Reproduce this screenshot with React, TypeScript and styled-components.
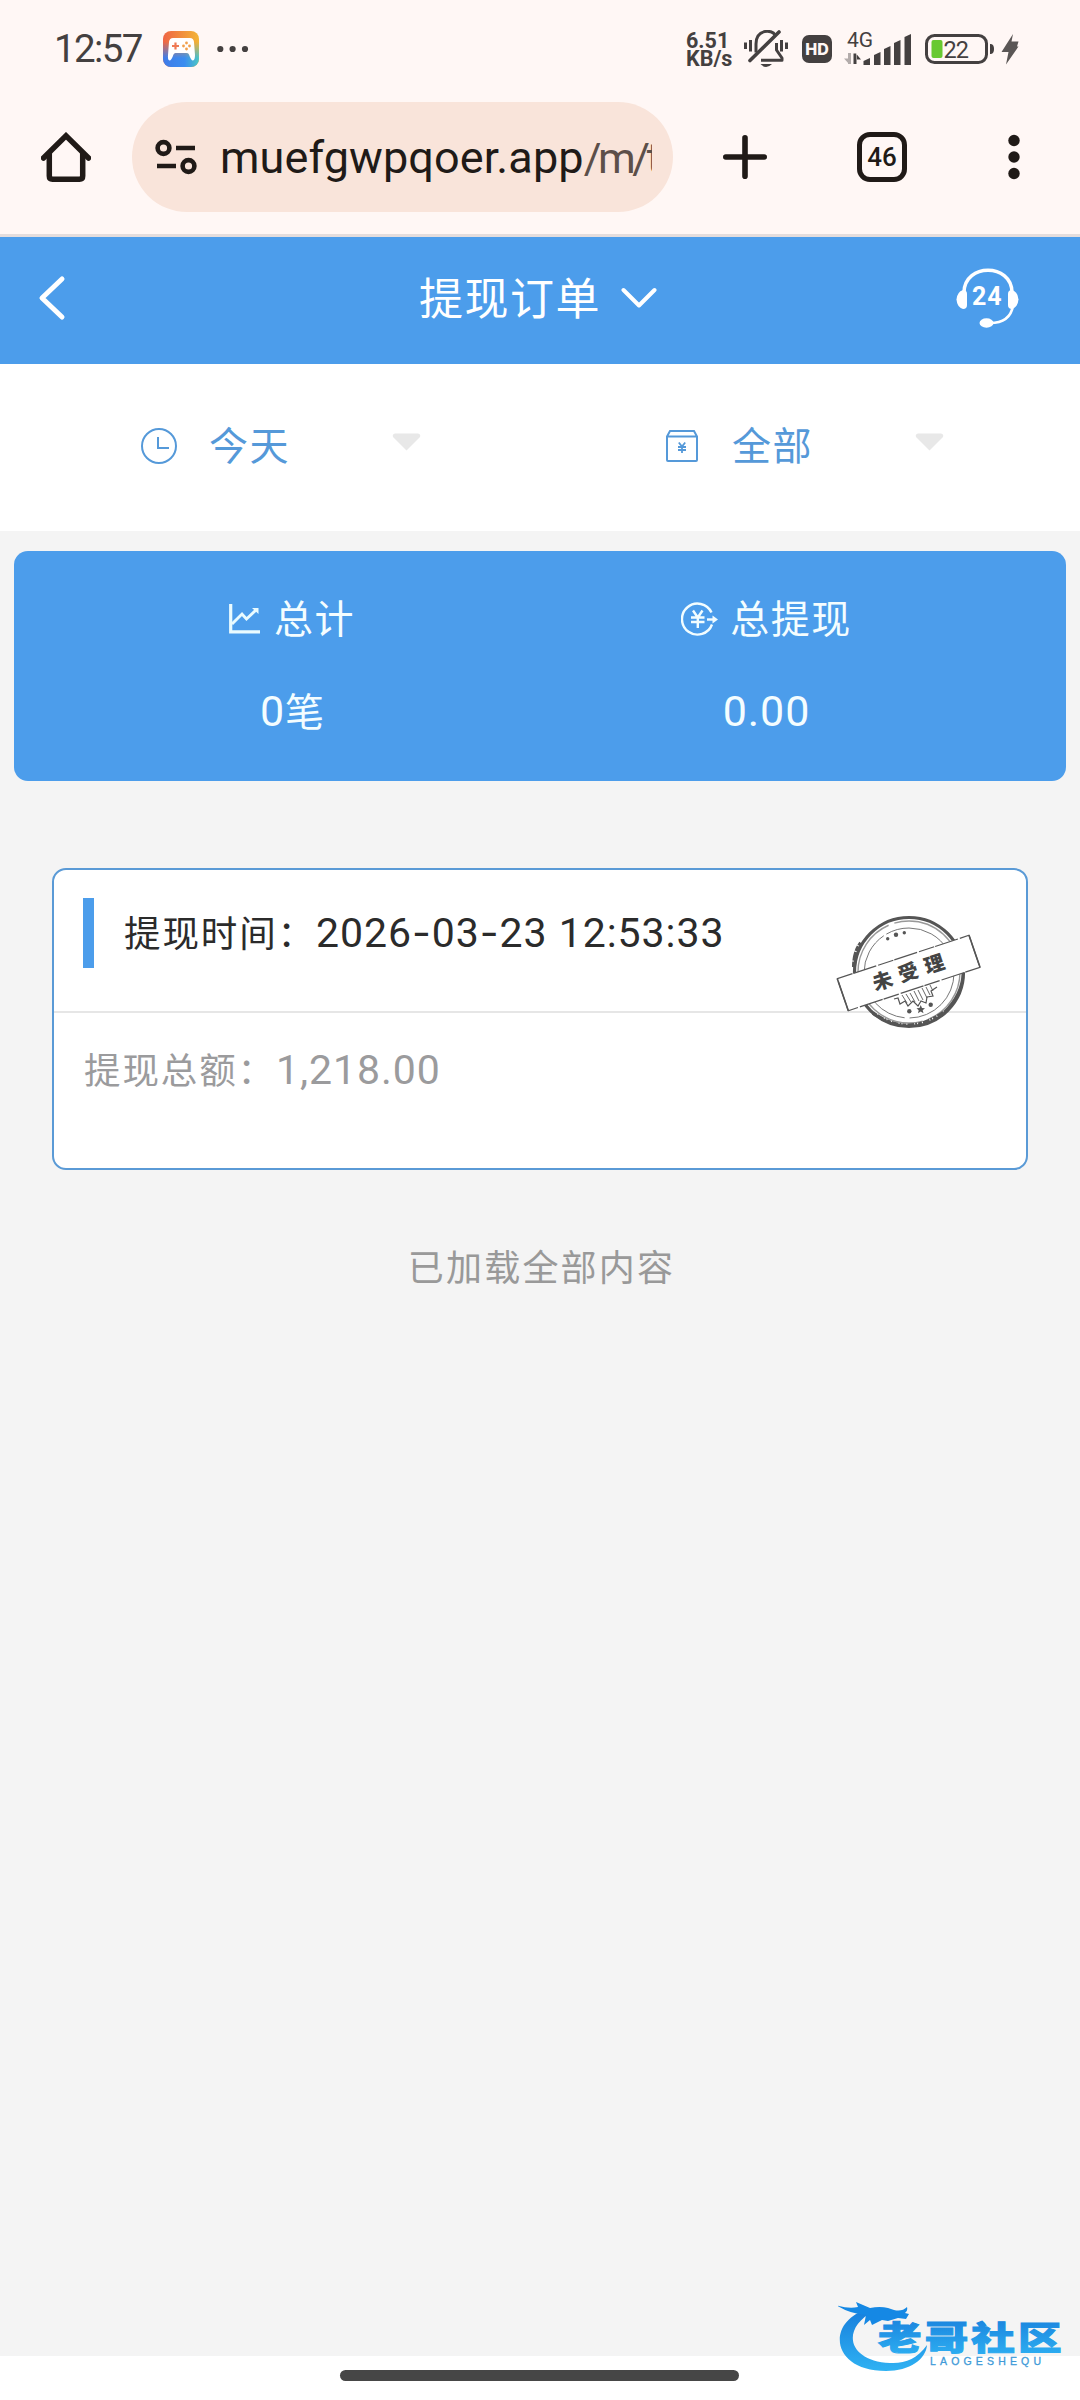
import styled, { createGlobalStyle } from 'styled-components';

const orders = [
  { id: 1, date: ['2026', '03', '23'], time: '12:53:33', total: '1,218.00', status: '未受理' },
];

const signalBars = [
  { x: 19.5, top: 24 },
  { x: 30, top: 18 },
  { x: 40, top: 12 },
  { x: 50, top: 6 },
  { x: 60.5, top: 0 },
];

export default function App() {
  return <Screen>
    <GlobalStyle />
    <StatusBar />
    <BrowserBar />

    <PageHeader>
      <svg width="28" height="48" viewBox="0 0 28 48" fill="none" stroke="#fff" strokeWidth="5" strokeLinecap="round" strokeLinejoin="round">
        <path d="M24 5 L4 24 L24 43" />
      </svg>
      <PageTitle>
        <span>提现订单</span>
        <svg width="36" height="22" viewBox="0 0 36 22" fill="none" stroke="#fff" strokeWidth="4" strokeLinecap="round" strokeLinejoin="round">
          <path d="M2.5 3 L18 18.5 L33.5 3" />
        </svg>
      </PageTitle>
      <Headset />
    </PageHeader>

    <Filters>
      <Filter $offset={141} $gap={32}>
        <ClockIcon />
        <FilterLabel>今天</FilterLabel>
        <Caret />
      </Filter>
      <Filter $offset={126} $gap={34}>
        <PackageIcon />
        <FilterLabel>全部</FilterLabel>
        <Caret />
      </Filter>
    </Filters>

    <Content>
      <Summary>
        <SummaryCell $shift={30}>
          <SummaryLabel $gap={13}><ChartIcon /><span>总计</span></SummaryLabel>
          <SummaryValue><Num $size={43}>0</Num>笔</SummaryValue>
        </SummaryCell>
        <SummaryCell $shift={-73}>
          <SummaryLabel $gap={11}><YenIcon /><span>总提现</span></SummaryLabel>
          <SummaryValue><Num $size={43}>0.00</Num></SummaryValue>
        </SummaryCell>
      </Summary>

      {orders.map(o =>
        <Order key={o.id}>
          <OrderHead>
            <Marker />
            <span>
              提现时间：
              <Num $size={41}>
                {o.date[0]}<Hyphen>-</Hyphen>{o.date[1]}<Hyphen>-</Hyphen>{o.date[2]} {o.time}
              </Num>
            </span>
          </OrderHead>
          <OrderBody>提现总额：<Num $size={41}>{o.total}</Num></OrderBody>
          <Stamp label={o.status} />
        </Order>
      )}

      <EndNote>已加载全部内容</EndNote>
    </Content>

    <NavArea><NavPill /></NavArea>
    <Watermark />
  </Screen>;
}

function StatusBar() {
  return <StatusRow>
    <Clock>12:57</Clock>
    <GameIcon />
    <svg width="26" height="8" viewBox="0 0 26 8" fill="#444040">
      <circle cx="3.3" cy="4" r="3.1" />
      <circle cx="15.6" cy="4" r="3.1" />
      <circle cx="28" cy="4" r="3.1" />
    </svg>

    <StatusRight>
      <Speed>{'6.51\nKB/s'}</Speed>
      <MutedBell />
      <HdBadge>HD</HdBadge>
      <Signal />
      <Battery />
      <svg width="18" height="31" viewBox="0 0 18 31" fill="#5a5655">
        <path d="M12 0 L0.5 18 H7.5 L5 30.5 L17.5 12.5 H16 L17.5 7.5 H10.5 Z" />
      </svg>
    </StatusRight>
  </StatusRow>;
}

function BrowserBar() {
  return <BrowserRow>
    <svg width="50" height="50" viewBox="0 0 50 50" fill="none" stroke="#201a17" strokeWidth="5.5">
      <path d="M2.5 26 L25 3.8 L47.5 26" strokeLinecap="round" />
      <path d="M8.3 20 V44 Q8.3 47.2 11.5 47.2 H38.5 Q41.7 47.2 41.7 44 V20" />
    </svg>
    <UrlPill>
      <svg width="42" height="36" viewBox="0 0 42 36" fill="none" stroke="#201a17" strokeWidth="4.6">
        <circle cx="8.5" cy="9" r="5.9" />
        <path d="M21 9 H40 M2 27 H21" />
        <circle cx="33.5" cy="27" r="5.9" />
      </svg>
      <Url>muefgwpqoer.app<UrlPath>/m/t</UrlPath></Url>
    </UrlPill>
    <NewTab width="44" height="44" viewBox="0 0 44 44" stroke="#201a17" strokeWidth="5.6" strokeLinecap="round">
      <path d="M22 2.8 V41.2 M2.8 22 H41.2" />
    </NewTab>
    <TabCount>46</TabCount>
    <svg width="12" height="46" viewBox="0 0 12 46" fill="#201a17">
      <circle cx="6" cy="6.5" r="5.7" />
      <circle cx="6" cy="23" r="5.7" />
      <circle cx="6" cy="39.5" r="5.7" />
    </svg>
  </BrowserRow>;
}

function GameIcon() {
  return <svg width="36" height="36" viewBox="0 0 36 36">
    <defs>
      <linearGradient id="gameTop" x1="0" x2="1">
        <stop offset="0" stopColor="#ef6444" />
        <stop offset="1" stopColor="#f3b536" />
      </linearGradient>
      <linearGradient id="gameBottom" x1="0" x2="1">
        <stop offset="0" stopColor="#3f7be8" />
        <stop offset=".6" stopColor="#3b8df0" />
        <stop offset="1" stopColor="#4cc7c4" />
      </linearGradient>
      <linearGradient id="gameFade" x1="0" x2="0" y1="0" y2="1">
        <stop offset=".3" stopColor="#fff" stopOpacity="0" />
        <stop offset=".75" stopColor="#fff" />
      </linearGradient>
      <mask id="gameMask"><rect width="36" height="36" fill="url(#gameFade)" /></mask>
    </defs>
    <rect width="36" height="36" rx="8" fill="url(#gameTop)" />
    <rect width="36" height="36" rx="8" fill="url(#gameBottom)" mask="url(#gameMask)" />
    <path d="M10 7 H27 Q30.5 7 31 11 L32 24 Q32 29 30 29.5 Q28 29.5 26 23.5 Q25.5 22 24 22 H12.5 Q11 22 10.5 23.5 Q8.5 29.5 6.5 29.5 Q4.5 29 5 24 L6 11 Q6.5 7 10 7 Z" fill="#fff" />
    <path d="M12.5 11.5 V18.5 M9 15 H16" stroke="#ef7a55" strokeWidth="2.2" />
    <g fill="#f1a04b">
      <circle cx="23.5" cy="12" r="1.4" />
      <circle cx="23.5" cy="18" r="1.4" />
      <circle cx="20.5" cy="15" r="1.4" />
      <circle cx="26.5" cy="15" r="1.4" />
    </g>
  </svg>;
}

function MutedBell() {
  return <svg width="44" height="38" viewBox="0 0 44 38" fill="none" stroke="#444040" strokeWidth="3">
    <path d="M1.5 12.5 V19 M6.5 10 V21.5 M37.5 10 V21.5 M42.5 12.5 V19" />
    <path d="M12 22.5 V14 C12 -1 28 -1 31 5" />
    <path d="M32.5 13 V20 L38 28 V30.3 H17" strokeLinejoin="round" />
    <path d="M6 30.5 L35 2" strokeWidth="3.6" strokeLinecap="round" />
    <path d="M16.5 34 H28 Q22 40 16.5 34 Z" fill="#444040" stroke="none" />
  </svg>;
}

function Signal() {
  return <svg width="68" height="34" viewBox="0 0 68 34" fill="#444040" overflow="visible">
    <text x="3" y="15" fontFamily="Roboto, sans-serif" fontSize="21" textLength="26">4G</text>
    <path d="M4 21 V32 H7 V21 Z M0 26.5 L5 32 V26.5 Z" fill="#b3acab" />
    <path d="M9.5 21.5 V32 H12.5 V21.5 Z M12 21.5 L17 27.5 H12 Z" />
    {signalBars.map(b =>
      <path key={b.x} d={`M${b.x} ${b.top + 5} L${b.x + 6.5} ${b.top + 2} V33 H${b.x} Z`} />
    )}
  </svg>;
}

function Battery() {
  return <svg width="69" height="30" viewBox="0 0 69 30">
    <rect x="1.5" y="1.5" width="60" height="27" rx="8" fill="none" stroke="#444040" strokeWidth="3" />
    <rect x="6.5" y="6" width="11" height="18" rx="2" fill="#68c930" />
    <path d="M65 10 H66 Q69 10.5 69 15 Q69 19.5 66 20 H65 Z" fill="#444040" />
    <text x="18.5" y="23.5" fontFamily="Roboto, sans-serif" fontSize="23.5" textLength="25.5" fill="#444040">22</text>
  </svg>;
}

function Headset() {
  return <svg width="63" height="60" viewBox="0 0 63 60">
    <path d="M8 24 C9 -5 55 -5 56 24" fill="none" stroke="#fff" strokeWidth="3.5" />
    <path d="M57 38 C55 49 47 55 34 55" fill="none" stroke="#fff" strokeWidth="2.6" />
    <path d="M7 22 Q11 22 11 26 V37 Q11 41 7 41 Q1 39 0.5 31.5 Q1 24 7 22 Z" fill="#fff" />
    <path d="M56 22 Q52 22 52 26 V37 Q52 41 56 41 Q62 39 62.5 31.5 Q62 24 56 22 Z" fill="#fff" />
    <ellipse cx="30.5" cy="55" rx="7" ry="4.7" fill="#fff" />
    <text x="16" y="37" fontFamily="Roboto, sans-serif" fontSize="25" fontWeight="700" textLength="29.5" fill="#fff">24</text>
  </svg>;
}

function ClockIcon() {
  return <svg width="36" height="36" viewBox="0 0 36 36" fill="none" stroke="#5599d9" strokeWidth="2">
    <circle cx="18" cy="18" r="17" />
    <path d="M17 9 V20 H28" />
  </svg>;
}

function PackageIcon() {
  return <svg width="32" height="32" viewBox="0 0 32 32" fill="none" stroke="#5599d9" strokeWidth="2">
    <path d="M1 6.5 L4 1 H28 L31 6.5 V30 Q31 31 30 31 H2 Q1 31 1 30 Z M1 6.5 H31" />
    <path d="M12.8 12.5 L16 16.5 L19.2 12.5 M16 16.5 V23 M12 17 H20 M12 20 H20" strokeWidth="1.8" />
  </svg>;
}

function Caret() {
  return <svg width="29" height="18" viewBox="0 0 29 18" fill="#e8e8e8">
    <path d="M3 0.5 H26 Q29 1 28 4 L14.5 17.5 L1 4 Q0 1 3 0.5 Z" />
  </svg>;
}

function ChartIcon() {
  return <svg width="32" height="30" viewBox="0 0 32 30" fill="none" stroke="#e9fbff">
    <path d="M1.7 0 V27.8 H31" strokeWidth="3.2" />
    <path d="M3 20 L13 10 L17.5 15 L27.5 5.5" strokeWidth="2.9" />
    <path d="M23 4 H29.5 V10 Z" fill="#e9fbff" stroke="none" />
  </svg>;
}

function YenIcon() {
  return <svg width="38" height="34" viewBox="0 0 38 34" fill="none" stroke="#f2fdff" strokeWidth="2.4">
    <path d="M30.5 10.5 A15.5 15.5 0 1 0 31 22.5" />
    <path d="M12 8.5 L16.800 15.5 L21.5 8.5 M16.8 15.5 V26 M10 15.5 H23.5 M10 20 H23.5" />
    <path d="M26 17.5 H33" />
    <path d="M31.5 13.5 L37 17.5 L31.5 21.5 Z" fill="#f2fdff" stroke="none" />
  </svg>;
}

function Stamp({ label }: { label: string }) {
  const [a, b, c] = label;
  return <StampSvg width="146" height="118" viewBox="0 0 146 118" fill="none" stroke="#555">
    <circle cx="73" cy="60" r="54.5" fill="#fff" strokeWidth="3.2" />
    <circle cx="73" cy="60" r="51" strokeWidth="1.4" stroke="#999" strokeDasharray="60 6 90 3" />
    <circle cx="73" cy="61" r="45" strokeWidth="1" strokeDasharray="70 5 110 3" stroke="#777" />
    <path d="M18 55 Q18 40 25 31" strokeWidth="4" strokeDasharray="5 1 9 1" />
    <path d="M37 101 Q72 126 108 100" strokeWidth="3.5" strokeDasharray="4 1 7 1 2 1" />
    <path d="M108 100 Q126 83 127 60" strokeWidth="2.4" />
    <path d="M58 87 L62 86 L64 92 L69 89 L72 94 L77 89 L82 94 L85 89 L90 91 L91 85 L97 84 L95 79 L101 75" fill="#fff" strokeWidth="1.2" />
    <path d="M66 83 L71 91 M70 82 L75 90 M74 81 L79 90 M78 79 L83 89 M82 78 L87 88 M86 76 L91 86 M90 75 L94 83 M94 73 L97 79" strokeWidth="0.9" />
    <g fill="#555" stroke="none">
      <circle cx="51.7" cy="26.7" r="1.7" />
      <circle cx="60" cy="22.7" r="2.2" />
      <circle cx="68.3" cy="20.7" r="1.7" />
      <circle cx="73.3" cy="99.3" r="2.2" />
      <path d="M84.7 93 L86 96 L89 96.2 L86.7 98.2 L87.5 101.2 L84.7 99.5 L82 101.2 L82.7 98.2 L80.5 96.2 L83.5 96 Z" />
      <circle cx="94.7" cy="92.7" r="2.2" />
    </g>
    <path d="M1.3 66.7 L133 23.3 L144 55.3 L12.3 98.7 Z" fill="#fff" strokeWidth="1.2" strokeDasharray="16 1 24 2" />
    <path d="M1.3 66.7 L12.3 98.7 M133 23.3 L144 55.3" strokeWidth="1.6" />
    <g transform="rotate(-18 73 60)" fill="#444" stroke="none" fontFamily="'Noto Sans CJK SC', sans-serif" fontWeight="900" fontSize="20" textAnchor="middle">
      <text x="46" y="67.5">{a}</text>
      <text x="73" y="67.5">{b}</text>
      <text x="100.5" y="67.5">{c}</text>
    </g>
  </StampSvg>;
}

function Watermark() {
  return <WatermarkSvg width="226" height="76" viewBox="0 0 226 76">
    <defs>
      <linearGradient id="brand" x1="0" x2="0" y1="0" y2="1">
        <stop offset="0" stopColor="#177ddb" />
        <stop offset="1" stopColor="#2fb2f3" />
      </linearGradient>
    </defs>
    {/* dragon: tail ring, then head with whiskers */}
    <path d="M30 10 C-12 22 -8 72 48 72 C72 72 88 60 89 46 C79 60 66 65 52 64 C10 62 2 30 36 12 Z" fill="url(#brand)" />
    <path d="M-2 6 Q10 10 20 8 L18 3 L32 9 Q42 7 50 9 L56 11 Q64 13 69 8 Q70 12 67 14 L71 15 L68 20 L60 19 L50 22 L44 21 L34 26 L32 21 L26 26 L28 16 Q12 15 -2 6 Z" fill="#1588e4" />
    <g transform="translate(40 51) scale(1.34 1)">
      <text fontFamily="'Noto Sans CJK SC', sans-serif" fontWeight="900" fontSize="32.5" textLength="137" y="0" fill="url(#brand)" stroke="url(#brand)" strokeWidth="1">老哥社区</text>
    </g>
    <text x="92" y="65.5" fontFamily="'Liberation Sans', sans-serif" fontSize="10.5" textLength="111" fill="#3f9bd8" stroke="#3f9bd8" strokeWidth="0.3">LAOGESHEQU</text>
  </WatermarkSvg>;
}

const GlobalStyle = createGlobalStyle`
  body {
    margin: 0;
    background: #f4f4f4;
  }

  svg {
    display: block;
    flex: none;
  }
`;

const Screen = styled.div`
  position: relative;
  display: flex;
  flex-direction: column;
  width: 1080px;
  height: 2400px;
  overflow: hidden;
  background: #f4f4f4;
  font-family: 'Noto Sans CJK SC', sans-serif;
`;

const StatusRow = styled.div`
  display: flex;
  align-items: center;
  box-sizing: border-box;
  height: 98px;
  padding: 0 61px 0 54px;
  background: #fff7f5;

  > svg + svg {
    margin-left: 18px;
    overflow: visible;
  }
`;

const Clock = styled.div`
  width: 109px;
  font: 400 38.5px/48px Roboto, sans-serif;
  letter-spacing: -1.6px;
  color: #444040;
`;

const StatusRight = styled.div`
  display: flex;
  align-items: center;
  margin-left: auto;

  > svg:last-child {
    margin-left: 7px;
  }
`;

const Speed = styled.div`
  width: 46px;
  margin: 2px 12px 0 0;
  font: 700 21.5px/18px Roboto, sans-serif;
  white-space: pre;
  color: #444040;
`;

const HdBadge = styled.div`
  width: 30px;
  margin: 0 12px 0 14px;
  border-radius: 7px;
  background: #444040;
  font: 800 16px/28px Inter, sans-serif;
  text-align: center;
  color: #fff7f5;

  + svg {
    margin-right: 13px;
  }
`;

const BrowserRow = styled.div`
  display: flex;
  align-items: center;
  box-sizing: border-box;
  height: 139px;
  padding: 4px 60px 22px 41px;
  border-bottom: 3px solid #e4dddd;
  background: #fff7f5;
`;

const UrlPill = styled.div`
  display: flex;
  align-items: center;
  box-sizing: border-box;
  width: 541px;
  height: 110px;
  margin-left: 41px;
  padding: 0 21px 0 23px;
  border-radius: 55px;
  background: #f9e4da;
`;

const Url = styled.div`
  flex: 1;
  margin: 2px 0 0 23px;
  overflow: hidden;
  font: 400 45px/60px Roboto, sans-serif;
  letter-spacing: 0.1px;
  white-space: nowrap;
  color: #201a17;
`;

const UrlPath = styled.span`
  font-size: 43px;
  letter-spacing: -3.4px;
  color: #5c4f49;
`;

const NewTab = styled.svg`
  margin-left: 50px;
`;

const TabCount = styled.div`
  box-sizing: border-box;
  width: 50px;
  height: 50px;
  margin: 0 101px 0 90px;
  border: 5.5px solid #201a17;
  border-radius: 13px;
  font: 500 26px/40px Roboto, sans-serif;
  text-align: center;
  color: #201a17;
`;

const PageHeader = styled.header`
  display: flex;
  align-items: center;
  justify-content: space-between;
  box-sizing: border-box;
  height: 127px;
  padding: 0 61px 6px 38px;
  background: #4c9deb;
`;

const PageTitle = styled.div`
  display: flex;
  align-items: center;
  gap: 20px;
  margin-left: 54px;
  font-size: 44px;
  line-height: 60px;
  letter-spacing: 1.5px;
  color: #fff;

  > span {
    margin-top: -4px;
  }
`;

const Filters = styled.div`
  display: flex;
  box-sizing: border-box;
  height: 167px;
  background: #fff;
`;

const FilterLabel = styled.div`
  width: 183px;
  margin-top: -6px;
  font-size: 39px;
  line-height: 56px;
  letter-spacing: 1.5px;
  color: #5599d9;
`;

const Filter = styled.div<{ $offset: number; $gap: number }>`
  display: flex;
  align-items: center;
  box-sizing: border-box;
  width: 540px;
  padding: 0 0 3px ${p => p.$offset}px;

  > ${FilterLabel} {
    margin-left: ${p => p.$gap}px;
  }

  > svg:last-child {
    margin-bottom: 8px;
  }
`;

const Content = styled.main`
  flex: 1;
  padding: 20px 14px 0;
`;

const Summary = styled.section`
  display: flex;
  box-sizing: border-box;
  height: 230px;
  padding-top: 39px;
  border-radius: 14px;
  background: #4c9deb;
  color: #f4fdff;
`;

const SummaryCell = styled.div<{ $shift: number }>`
  display: flex;
  flex-direction: column;
  align-items: center;
  gap: 34px;
  box-sizing: border-box;
  width: 50%;
  padding-left: ${p => Math.max(p.$shift, 0)}px;
  padding-right: ${p => Math.max(-p.$shift, 0)}px;
`;

const SummaryLabel = styled.div<{ $gap: number }>`
  display: flex;
  align-items: center;
  gap: ${p => p.$gap}px;
  height: 57px;
  font-size: 39px;
  line-height: 57px;
  letter-spacing: 1.5px;

  > span {
    margin-top: -4px;
  }
`;

const SummaryValue = styled.div`
  font-size: 39px;
  line-height: 57px;
`;

const Num = styled.span<{ $size: number }>`
  font-family: Roboto, sans-serif;
  font-size: ${p => p.$size}px;
  line-height: 1;
  letter-spacing: 0.95px;
`;

// Inter's hyphen is wide enough to sit between the date parts
const Hyphen = styled.span`
  font-family: Inter, sans-serif;
`;

const Order = styled.article`
  position: relative;
  box-sizing: border-box;
  height: 302px;
  margin: 87px 38px 0;
  border: 2px solid #5a9ad6;
  border-radius: 14px;
  background: #fff;
  font-size: 36.5px;
  letter-spacing: 1.9px;
`;

const OrderHead = styled.div`
  display: flex;
  box-sizing: border-box;
  height: 143px;
  padding: 28px 0 0 29px;
  border-bottom: 2px solid #e6e6e6;
  line-height: 68px;
  white-space: nowrap;
  color: #2b2b2b;
`;

const Marker = styled.div`
  width: 11px;
  height: 70px;
  margin-right: 30px;
  background: #4c9deb;
`;

const OrderBody = styled.div`
  padding: 22px 0 0 30px;
  line-height: 68px;
  color: #9b9b9d;
`;

const StampSvg = styled.svg`
  position: absolute;
  left: 782px;
  top: 42px;
`;

const EndNote = styled.p`
  margin: 65px 0 0 3px;
  font-size: 36px;
  line-height: 60px;
  letter-spacing: 2.2px;
  text-align: center;
  color: #999;
`;

const NavArea = styled.div`
  display: flex;
  justify-content: center;
  box-sizing: border-box;
  height: 44px;
  padding: 14px 1px 0 0;
  background: #fff;
`;

const NavPill = styled.div`
  width: 399px;
  height: 11px;
  border-radius: 6px;
  background: #464646;
`;

const WatermarkSvg = styled.svg`
  position: absolute;
  left: 838px;
  top: 2299px;
`;
